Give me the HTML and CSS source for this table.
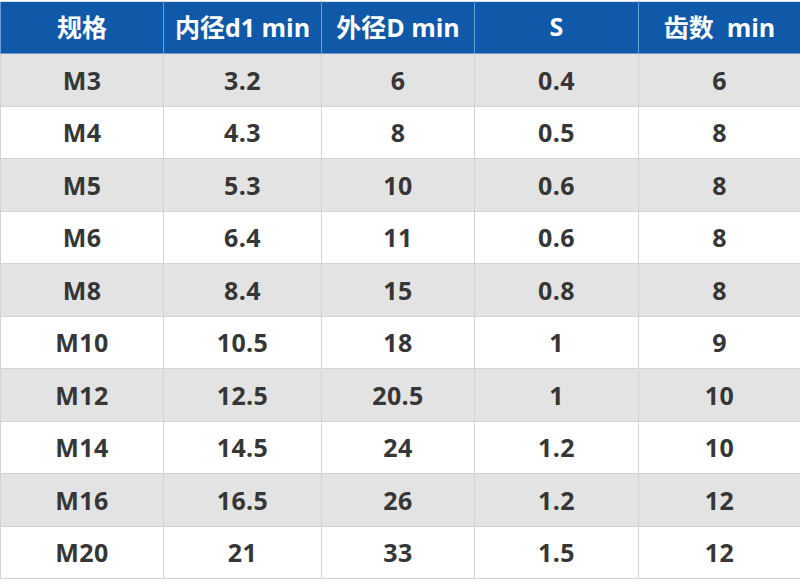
FILE: index.html
```html
<!DOCTYPE html>
<html lang="zh-CN">
<head>
<meta charset="utf-8">
<title>规格表</title>
<link rel="stylesheet" href="styles.css">
</head>
<body>
<table class="spec">
  <colgroup>
    <col class="c1"><col class="c2"><col class="c3"><col class="c4"><col class="c5">
  </colgroup>
  <thead>
    <tr><th>规格</th><th>内径d1 min</th><th>外径D min</th><th>S</th><th>齿数&nbsp; min</th></tr>
  </thead>
  <tbody>
    <tr><td>M3</td><td>3.2</td><td>6</td><td>0.4</td><td>6</td></tr>
    <tr><td>M4</td><td>4.3</td><td>8</td><td>0.5</td><td>8</td></tr>
    <tr><td>M5</td><td>5.3</td><td>10</td><td>0.6</td><td>8</td></tr>
    <tr><td>M6</td><td>6.4</td><td>11</td><td>0.6</td><td>8</td></tr>
    <tr><td>M8</td><td>8.4</td><td>15</td><td>0.8</td><td>8</td></tr>
    <tr><td>M10</td><td>10.5</td><td>18</td><td>1</td><td>9</td></tr>
    <tr><td>M12</td><td>12.5</td><td>20.5</td><td>1</td><td>10</td></tr>
    <tr><td>M14</td><td>14.5</td><td>24</td><td>1.2</td><td>10</td></tr>
    <tr><td>M16</td><td>16.5</td><td>26</td><td>1.2</td><td>12</td></tr>
    <tr><td>M20</td><td>21</td><td>33</td><td>1.5</td><td>12</td></tr>
  </tbody>
</table>
</body>
</html>
```
FILE: styles.css
```css
html, body {
  margin: 0;
  padding: 0;
  background: #ffffff;
}
.spec {
  border-collapse: collapse;
  table-layout: fixed;
  width: 800px;
  margin-top: 1px;
  font-family: "Open Sans", "Noto Sans CJK SC", sans-serif;
  font-weight: 700;
  font-size: 25px;
  letter-spacing: 0.4px;
  color: #363636;
}
.c1 { width: 163px; }
.c2 { width: 158px; }
.c3 { width: 153px; }
.c4 { width: 164px; }
.c5 { width: 162px; }
.spec th, .spec td {
  border: 1px solid #d3d3d3;
  text-align: center;
  padding: 0;
  white-space: nowrap;
}
.spec th {
  background: #0f59a8;
  color: #ffffff;
  height: 48px;
  padding-bottom: 3px;
  border-color: #6f9bd0;
  border-top-color: #d8e2ee;
  font-size: 25px;
  letter-spacing: 0;
}
.spec td {
  height: 51.5px;
}
.spec tbody tr:nth-child(odd) td {
  background: #e3e3e3;
}
```
